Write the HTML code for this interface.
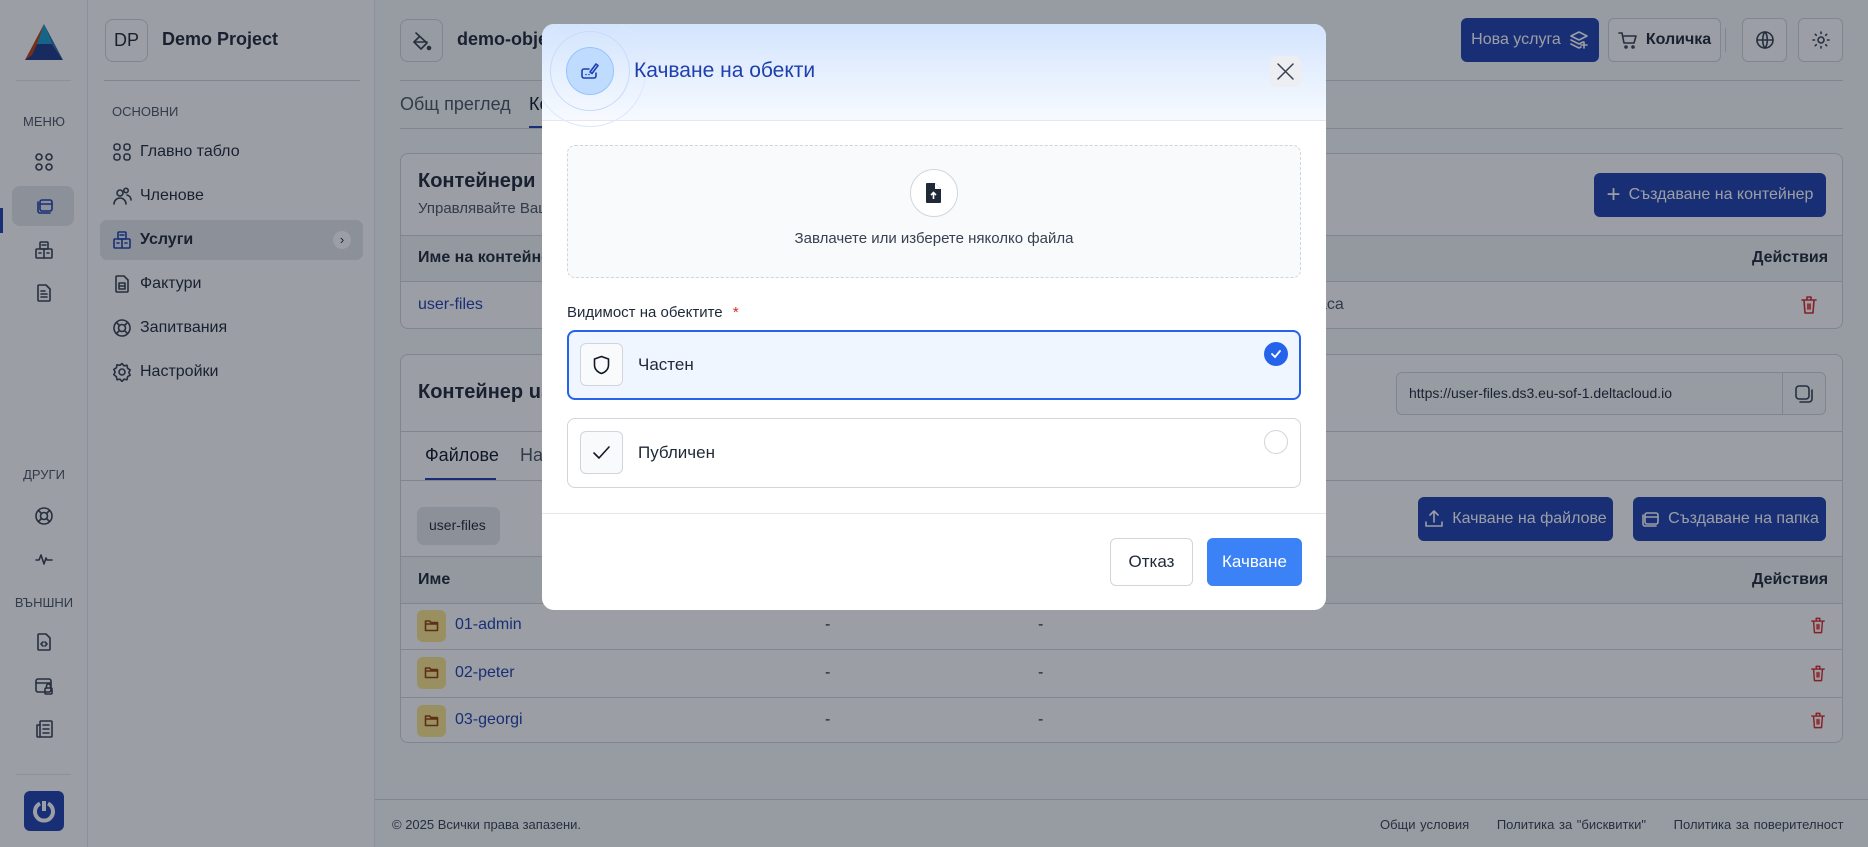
<!DOCTYPE html>
<html><head><meta charset="utf-8"><style>
*{box-sizing:border-box;margin:0;padding:0}
body{width:1868px;height:847px;overflow:hidden;position:relative;background:#f9fafb;font-family:"Liberation Sans",sans-serif;color:#1f2937}
.a{position:absolute}
.ic{position:absolute;fill:none;stroke:#374151;stroke-width:1.6;stroke-linecap:round;stroke-linejoin:round}
.t{position:absolute;white-space:nowrap}
.btn{position:absolute;background:#1e40af;color:#fff;border-radius:6px;font-size:16px;display:flex;align-items:center;justify-content:center;gap:8px}
.obtn{position:absolute;border:1px solid #d1d5db;border-radius:6px;background:#fff;display:flex;align-items:center;justify-content:center;gap:8px;font-size:16px}
.card{position:absolute;background:#fff;border:1px solid #d1d5db;border-radius:8px}
.hl{position:absolute;height:1px;background:#d1d5db}
.folder{position:absolute;width:29px;height:32px;border-radius:6px;background:#fde68a}
</style></head><body>

<!-- rail -->
<div class="a" style="left:0;top:0;width:88px;height:847px;background:#fff;border-right:1px solid #e5e7eb"></div>
<svg class="a" style="left:23px;top:22px" width="42" height="40" viewBox="0 0 42 40"><polygon points="21,2 2,38 14,38" fill="#c2410c"/><polygon points="21,2 14,22 29,22" fill="#1d9bd1"/><polygon points="21,2 40,38 29,22" fill="#1e6fa8"/><polygon points="14,22 29,22 40,38 2,38" fill="#1e3a8a"/><polygon points="14,22 9,33 2,38" fill="#c2410c"/></svg>
<div class="hl" style="left:16px;top:80px;width:55px;background:#e5e7eb"></div>
<div class="t" style="left:0;width:88px;text-align:center;top:114px;font-size:13px;color:#4b5563">МЕНЮ</div>
<svg class="ic" style="left:34px;top:152px" width="20" height="20" viewBox="0 0 20 20"><rect x="2" y="2" width="6" height="6" rx="3"/><rect x="12" y="2" width="6" height="6" rx="3"/><rect x="2" y="12" width="6" height="6" rx="3"/><rect x="12" y="12" width="6" height="6" rx="3"/></svg>
<div class="a" style="left:12px;top:186px;width:62px;height:40px;border-radius:8px;background:#e5e7eb"></div>
<div class="a" style="left:0;top:208px;width:3px;height:25px;background:#1e40af"></div>
<svg class="ic" style="left:34px;top:196px;stroke:#1e40af" width="20" height="20" viewBox="0 0 20 20"><path d="M4 6v9a2 2 0 0 0 2 2h10"/><rect x="6" y="4" width="12" height="11" rx="2"/><path d="M6 8h12"/></svg>
<svg class="ic" style="left:34px;top:240px" width="20" height="20" viewBox="0 0 20 20"><rect x="6" y="2" width="8" height="7" rx="1"/><rect x="2" y="9" width="16" height="9" rx="1"/><path d="M10 9v9M8 5h4M5 13h2M13 13h2"/></svg>
<svg class="ic" style="left:34px;top:283px" width="20" height="20" viewBox="0 0 20 20"><path d="M5 2h7l4 4v11a1 1 0 0 1-1 1H5a1 1 0 0 1-1-1V3a1 1 0 0 1 1-1z"/><path d="M7 8h4M7 11h6M7 14h6"/></svg>
<div class="t" style="left:0;width:88px;text-align:center;top:467px;font-size:13px;color:#4b5563">ДРУГИ</div>
<svg class="ic" style="left:34px;top:506px" width="20" height="20" viewBox="0 0 20 20"><circle cx="10" cy="10" r="8"/><circle cx="10" cy="10" r="3.5"/><path d="M4.5 4.5l3 3M15.5 4.5l-3 3M4.5 15.5l3-3M15.5 15.5l-3-3"/></svg>
<svg class="ic" style="left:34px;top:549px" width="20" height="20" viewBox="0 0 20 20"><path d="M2 11h3l2-5 3 9 2-6 1 2h5"/></svg>
<div class="t" style="left:0;width:88px;text-align:center;top:595px;font-size:13px;color:#4b5563">ВЪНШНИ</div>
<svg class="ic" style="left:34px;top:632px" width="20" height="20" viewBox="0 0 20 20"><path d="M5 2h7l4 4v11a1 1 0 0 1-1 1H5a1 1 0 0 1-1-1V3a1 1 0 0 1 1-1z"/><path d="M9 10l-2 2 2 2M11 10l2 2-2 2"/></svg>
<svg class="ic" style="left:34px;top:676px" width="20" height="20" viewBox="0 0 20 20"><rect x="2" y="3" width="15" height="13" rx="2"/><path d="M2 7h15"/><rect x="11" y="12" width="7" height="6" rx="1"/><path d="M12.5 12v-2a2 2 0 0 1 4 0v2"/></svg>
<svg class="ic" style="left:34px;top:719px" width="20" height="20" viewBox="0 0 20 20"><rect x="6" y="2" width="12" height="16" rx="1"/><path d="M6 6H3v11a1 1 0 0 0 1 1h2M9 6h6M9 10h6M9 14h6"/></svg>
<div class="hl" style="left:16px;top:774px;width:55px;background:#e5e7eb"></div>
<div class="a" style="left:24px;top:791px;width:40px;height:40px;border-radius:6px;background:#1e40af"></div>
<svg class="a" style="left:30px;top:797px" width="28" height="28" viewBox="0 0 28 28"><path d="M10 6.5A9 9 0 1 0 18 6.5" fill="none" stroke="#fff" stroke-width="4"/><path d="M14 4v10" stroke="#fff" stroke-width="4"/></svg>

<!-- sidebar 2 -->
<div class="a" style="left:88px;top:0;width:287px;height:847px;background:#fff;border-right:1px solid #e5e7eb"></div>
<div class="a" style="left:105px;top:19px;width:43px;height:43px;border:1px solid #d1d5db;border-radius:8px;font-size:18px;display:flex;align-items:center;justify-content:center">DP</div>
<div class="t" style="left:162px;top:29px;font-size:18px;font-weight:bold;color:#1f2937">Demo Project</div>
<div class="hl" style="left:104px;top:80px;width:256px"></div>
<div class="t" style="left:112px;top:104px;font-size:13px;color:#4b5563">ОСНОВНИ</div>
<div class="a" style="left:100px;top:220px;width:263px;height:40px;border-radius:7px;background:#e5e7eb"></div>
<svg class="ic" style="left:112px;top:142px" width="20" height="20" viewBox="0 0 20 20"><rect x="2" y="2" width="6" height="6" rx="2.5"/><rect x="12" y="2" width="6" height="6" rx="2.5"/><rect x="2" y="12" width="6" height="6" rx="2.5"/><rect x="12" y="12" width="6" height="6" rx="2.5"/></svg>
<div class="t" style="left:140px;top:143px;font-size:16px">Главно табло</div>
<svg class="ic" style="left:112px;top:186px" width="20" height="20" viewBox="0 0 20 20"><circle cx="8" cy="7" r="3"/><path d="M2 18a6 6 0 0 1 12 0"/><circle cx="14" cy="4.5" r="2.2"/><path d="M15 9a5 5 0 0 1 4 5"/></svg>
<div class="t" style="left:140px;top:187px;font-size:16px">Членове</div>
<svg class="ic" style="left:112px;top:230px;stroke:#1e40af" width="20" height="20" viewBox="0 0 20 20"><rect x="6" y="2" width="8" height="7" rx="1"/><rect x="2" y="9" width="16" height="9" rx="1"/><path d="M10 9v9M8 5h4M5 13h2M13 13h2"/></svg>
<div class="t" style="left:140px;top:231px;font-size:16px;font-weight:bold">Услуги</div>
<div class="a" style="left:333px;top:231px;width:18px;height:18px;border-radius:50%;background:#fff;font-size:13px;text-align:center;line-height:17px">›</div>
<svg class="ic" style="left:112px;top:274px" width="20" height="20" viewBox="0 0 20 20"><path d="M5 2h7l4 4v11a1 1 0 0 1-1 1H5a1 1 0 0 1-1-1V3a1 1 0 0 1 1-1z"/><path d="M7 9h6v6H7zM7 12h6"/></svg>
<div class="t" style="left:140px;top:275px;font-size:16px">Фактури</div>
<svg class="ic" style="left:112px;top:318px" width="20" height="20" viewBox="0 0 20 20"><circle cx="10" cy="10" r="8"/><circle cx="10" cy="10" r="3.5"/><path d="M4.5 4.5l3 3M15.5 4.5l-3 3M4.5 15.5l3-3M15.5 15.5l-3-3"/></svg>
<div class="t" style="left:140px;top:319px;font-size:16px">Запитвания</div>
<svg class="ic" style="left:112px;top:362px" width="20" height="20" viewBox="0 0 20 20"><circle cx="10" cy="10" r="3"/><path d="M10 1.5l2 2.3 3-.5.6 3 2.6 1.6-1.4 2.6 1.4 2.6-2.6 1.6-.6 3-3-.5-2 2.3-2-2.3-3 .5-.6-3L1.8 12.6 3.2 10 1.8 7.4l2.6-1.6.6-3 3 .5z"/></svg>
<div class="t" style="left:140px;top:363px;font-size:16px">Настройки</div>

<!-- main header -->
<div class="a" style="left:400px;top:19px;width:43px;height:43px;border:1px solid #d1d5db;border-radius:8px"></div>
<svg class="ic" style="left:411px;top:30px" width="22" height="22" viewBox="0 0 22 22"><path d="M5 3l11 10-6 6-7-7 5-5"/><path d="M3 12h13"/><circle cx="18" cy="18" r="1.5" fill="#374151"/></svg>
<div class="t" style="left:457px;top:29px;font-size:18px;font-weight:bold">demo-objects</div>
<div class="btn" style="left:1461px;top:18px;width:138px;height:44px">Нова услуга <svg class="ic" style="position:static;stroke:#fff" width="20" height="20" viewBox="0 0 20 20"><path d="M10 2l8 4-8 4-8-4z"/><path d="M2 10l8 4 4-2M2 14l8 4 2-1M15 12v6M12 15h6"/></svg></div>
<div class="obtn" style="left:1608px;top:18px;width:113px;height:44px;font-weight:bold"><svg class="ic" style="position:static" width="20" height="20" viewBox="0 0 20 20"><path d="M1 3h3l2 10h10l2-7H6"/><circle cx="8" cy="17" r="1"/><circle cx="15" cy="17" r="1"/></svg>Количка</div>
<div class="a" style="left:1725px;top:28px;width:1px;height:24px;background:#d1d5db"></div>
<div class="obtn" style="left:1742px;top:18px;width:45px;height:44px"><svg class="ic" style="position:static" width="20" height="20" viewBox="0 0 20 20"><circle cx="10" cy="10" r="8"/><path d="M2 10h16M10 2c3 3 3 13 0 16M10 2c-3 3-3 13 0 16"/></svg></div>
<div class="obtn" style="left:1798px;top:18px;width:45px;height:44px"><svg class="ic" style="position:static" width="20" height="20" viewBox="0 0 20 20"><circle cx="10" cy="10" r="3"/><path d="M10 2v1.5M10 16.5V18M2 10h1.5M16.5 10H18M4.3 4.3l1 1M14.7 14.7l1 1M4.3 15.7l1-1M14.7 5.3l1-1"/></svg></div>
<div class="hl" style="left:400px;top:80px;width:1443px"></div>
<div class="t" style="left:400px;top:94px;font-size:18px;color:#4b5563">Общ преглед</div>
<div class="t" style="left:529px;top:94px;font-size:18px;color:#111827">Контейнери</div>
<div class="a" style="left:529px;top:126px;width:110px;height:3px;background:#1e40af"></div>
<div class="hl" style="left:400px;top:128px;width:1443px"></div>

<!-- card 1 -->
<div class="card" style="left:400px;top:153px;width:1443px;height:176px"></div>
<div class="t" style="left:418px;top:170px;font-size:20px;font-weight:bold">Контейнери</div>
<div class="t" style="left:418px;top:200px;font-size:15px;color:#4b5563">Управлявайте Вашите контейнери</div>
<div class="btn" style="left:1594px;top:173px;width:232px;height:44px"><span style="font-size:24px;font-weight:300">+</span> Създаване на контейнер</div>
<div class="hl" style="left:401px;top:235px;width:1441px"></div>
<div class="a" style="left:401px;top:236px;width:1441px;height:45px;background:#f3f4f6"></div>
<div class="t" style="left:418px;top:249px;font-size:16px;font-weight:bold">Име на контейнера</div>
<div class="t" style="left:1752px;top:249px;font-size:16px;font-weight:bold">Действия</div>
<div class="hl" style="left:401px;top:281px;width:1441px"></div>
<div class="t" style="left:418px;top:296px;font-size:16px;color:#1e40af">user-files</div>
<div class="t" style="left:1318px;top:296px;font-size:16px;color:#4b5563">аса</div>
<svg class="ic" style="left:1800px;top:295px;stroke:#dc2626" width="18" height="20" viewBox="0 0 18 20"><path d="M2 5h14M7 5V2h4v3M4 5l1 13h8l1-13M8 9v5M10 9v5"/></svg>

<!-- card 2 -->
<div class="card" style="left:400px;top:354px;width:1443px;height:389px"></div>
<div class="t" style="left:418px;top:381px;font-size:20px;font-weight:bold">Контейнер user-files</div>
<div class="a" style="left:1396px;top:372px;width:430px;height:43px;border:1px solid #d1d5db;border-radius:6px;background:#f9fafb"></div>
<div class="t" style="left:1409px;top:385px;font-size:14px">https://user-files.ds3.eu-sof-1.deltacloud.io</div>
<div class="a" style="left:1782px;top:372px;width:1px;height:43px;background:#d1d5db"></div>
<svg class="ic" style="left:1794px;top:384px" width="20" height="20" viewBox="0 0 20 20"><rect x="2" y="2" width="13" height="13" rx="3"/><path d="M18 6v9a3 3 0 0 1-3 3H6"/></svg>
<div class="hl" style="left:401px;top:431px;width:1441px"></div>
<div class="t" style="left:425px;top:445px;font-size:18px;color:#111827">Файлове</div>
<div class="t" style="left:520px;top:445px;font-size:18px;color:#4b5563">Настройки</div>
<div class="a" style="left:425px;top:478px;width:71px;height:3px;background:#1e40af"></div>
<div class="hl" style="left:401px;top:480px;width:1441px"></div>
<div class="a" style="left:417px;top:507px;width:83px;height:38px;border-radius:7px;background:#e5e7eb"></div>
<div class="t" style="left:429px;top:517px;font-size:14px">user-files</div>
<div class="btn" style="left:1418px;top:497px;width:195px;height:44px"><svg class="ic" style="position:static;stroke:#fff" width="20" height="20" viewBox="0 0 20 20"><path d="M10 13V2M6 6l4-4 4 4M2 13v4h16v-4"/></svg>Качване на файлове</div>
<div class="btn" style="left:1633px;top:497px;width:193px;height:44px"><svg class="ic" style="position:static;stroke:#fff" width="20" height="20" viewBox="0 0 20 20"><path d="M3 6v9a2 2 0 0 0 2 2h11"/><rect x="5" y="4" width="13" height="11" rx="2"/><path d="M5 8h13"/></svg>Създаване на папка</div>
<div class="hl" style="left:401px;top:556px;width:1441px"></div>
<div class="a" style="left:401px;top:557px;width:1441px;height:46px;background:#f3f4f6"></div>
<div class="t" style="left:418px;top:571px;font-size:16px;font-weight:bold">Име</div>
<div class="t" style="left:1752px;top:571px;font-size:16px;font-weight:bold">Действия</div>
<div class="hl" style="left:401px;top:603px;width:1441px"></div>
<div class="hl" style="left:401px;top:649px;width:1441px"></div>
<div class="hl" style="left:401px;top:697px;width:1441px"></div>

<div class="folder" style="left:417px;top:610px"></div><div class="t" style="left:455px;top:616px;font-size:16px;color:#1e40af">01-admin</div>
<div class="folder" style="left:417px;top:657px"></div><div class="t" style="left:455px;top:664px;font-size:16px;color:#1e40af">02-peter</div>
<div class="folder" style="left:417px;top:705px"></div><div class="t" style="left:455px;top:711px;font-size:16px;color:#1e40af">03-georgi</div>
<svg class="ic" style="left:424px;top:618px;stroke:#92400e" width="15" height="15" viewBox="0 0 15 15"><path d="M1.5 3h4l1.5 1.5h6.5v8h-12z M1.5 6h12"/></svg>
<svg class="ic" style="left:424px;top:665px;stroke:#92400e" width="15" height="15" viewBox="0 0 15 15"><path d="M1.5 3h4l1.5 1.5h6.5v8h-12z M1.5 6h12"/></svg>
<svg class="ic" style="left:424px;top:713px;stroke:#92400e" width="15" height="15" viewBox="0 0 15 15"><path d="M1.5 3h4l1.5 1.5h6.5v8h-12z M1.5 6h12"/></svg>
<div class="t" style="left:825px;top:616px">-</div><div class="t" style="left:1038px;top:616px">-</div>
<div class="t" style="left:825px;top:664px">-</div><div class="t" style="left:1038px;top:664px">-</div>
<div class="t" style="left:825px;top:711px">-</div><div class="t" style="left:1038px;top:711px">-</div>
<svg class="ic" style="left:1810px;top:616px;stroke:#dc2626" width="16" height="19" viewBox="0 0 18 20"><path d="M2 5h14M7 5V2h4v3M4 5l1 13h8l1-13M8 9v5M10 9v5"/></svg>
<svg class="ic" style="left:1810px;top:664px;stroke:#dc2626" width="16" height="19" viewBox="0 0 18 20"><path d="M2 5h14M7 5V2h4v3M4 5l1 13h8l1-13M8 9v5M10 9v5"/></svg>
<svg class="ic" style="left:1810px;top:711px;stroke:#dc2626" width="16" height="19" viewBox="0 0 18 20"><path d="M2 5h14M7 5V2h4v3M4 5l1 13h8l1-13M8 9v5M10 9v5"/></svg>

<!-- footer -->
<div class="hl" style="left:375px;top:799px;width:1493px"></div>
<div class="t" style="left:392px;top:817px;font-size:13px;color:#374151">© 2025 Всички права запазени.</div>
<div class="t" style="left:1380px;top:817px;font-size:13px;color:#374151;word-spacing:1px">Общи условия &nbsp;&nbsp;&nbsp;&nbsp; Политика за "бисквитки" &nbsp;&nbsp;&nbsp;&nbsp; Политика за поверителност</div>

<!-- overlay -->
<div class="a" style="left:0;top:0;width:1868px;height:847px;background:rgba(17,24,39,0.42)"></div>

<!-- modal -->
<div class="a" style="left:542px;top:24px;width:784px;height:586px;background:#fff;border-radius:12px;overflow:hidden">
  <div class="a" style="left:0;top:0;width:784px;height:97px;background:linear-gradient(#d3e4fd,#f7faff);border-bottom:1px solid #e5e7eb"></div>
  <div class="a" style="left:-8px;top:-9px;width:112px;height:112px;border-radius:50%;border:1px solid #dbe8fd"></div>
  <div class="a" style="left:8px;top:7px;width:80px;height:80px;border-radius:50%;border:1px solid #c7dbfb"></div>
  <div class="a" style="left:24px;top:23px;width:48px;height:48px;border-radius:50%;background:#bfdbfe;border:1px solid #93c5fd"></div>
  <svg class="ic" style="left:38px;top:37px;stroke:#1e40af" width="20" height="20" viewBox="0 0 20 20"><path d="M9 8H4a2 2 0 0 0-2 2v5a2 2 0 0 0 2 2h10a2 2 0 0 0 2-2v-3"/><path d="M10 11l6-8 2 1.5-6 8z"/><path d="M6 13.5h.01M9 13.5h.01"/></svg>
  <div class="t" style="left:92px;top:35px;font-size:21px;color:#1e40af">Качване на обекти</div>
  <div class="a" style="left:728px;top:32px;width:31px;height:31px;border-radius:6px;background:#eceef2"></div>
  <svg class="ic" style="left:735px;top:39px;stroke:#374151;stroke-width:1.5" width="17" height="17" viewBox="0 0 17 17"><path d="M1 1l15 15M16 1L1 16"/></svg>

  <div class="a" style="left:25px;top:121px;width:734px;height:133px;border:1px dashed #d1d5db;border-radius:8px;background:#f9fafb"></div>
  <div class="a" style="left:368px;top:145px;width:48px;height:48px;border-radius:50%;background:#fff;border:1px solid #d1d5db"></div>
  <svg class="a" style="left:382px;top:158px" width="20" height="22" viewBox="0 0 20 22"><path d="M3 1h8l6 6v13a1 1 0 0 1-1 1H3a1 1 0 0 1-1-1V2a1 1 0 0 1 1-1z" fill="#1f2937"/><path d="M11 1v6h6" fill="#fff"/><path d="M9.5 17v-6M7 13l2.5-2.5L12 13" stroke="#fff" stroke-width="1.6" fill="none"/></svg>
  <div class="t" style="left:0;width:784px;text-align:center;top:206px;font-size:15px;color:#374151">Завлачете или изберете няколко файла</div>

  <div class="t" style="left:25px;top:280px;font-size:15px;color:#1f2937">Видимост на обектите <span style="color:#dc2626;margin-left:6px">*</span></div>

  <div class="a" style="left:25px;top:306px;width:734px;height:70px;border:2px solid #2563eb;border-radius:8px;background:#eff6ff"></div>
  <div class="a" style="left:38px;top:319px;width:43px;height:43px;border:1px solid #d1d5db;border-radius:6px;background:#f9fafb"></div>
  <svg class="ic" style="left:50px;top:331px;stroke:#111827" width="19" height="20" viewBox="0 0 19 20"><path d="M9.5 1.5l7 2.5v6c0 4.5-3.5 7.5-7 8.5-3.5-1-7-4-7-8.5V4z"/></svg>
  <div class="t" style="left:96px;top:331px;font-size:17px;color:#1f2937">Частен</div>
  <div class="a" style="left:722px;top:318px;width:24px;height:24px;border-radius:50%;background:#2563eb"></div>
  <svg class="a" style="left:727px;top:323px" width="14" height="14" viewBox="0 0 14 14"><path d="M3 7l3 3 5-6" fill="none" stroke="#fff" stroke-width="1.8" stroke-linecap="round"/></svg>

  <div class="a" style="left:25px;top:394px;width:734px;height:70px;border:1px solid #d1d5db;border-radius:8px;background:#fff"></div>
  <div class="a" style="left:38px;top:407px;width:43px;height:43px;border:1px solid #d1d5db;border-radius:6px;background:#f9fafb"></div>
  <svg class="ic" style="left:49px;top:419px;stroke:#111827" width="20" height="20" viewBox="0 0 20 20"><path d="M3 10l5 5 10-11"/></svg>
  <div class="t" style="left:96px;top:419px;font-size:17px;color:#1f2937">Публичен</div>
  <div class="a" style="left:722px;top:406px;width:24px;height:24px;border-radius:50%;border:1px solid #d1d5db;background:#fff"></div>

  <div class="a" style="left:0;top:489px;width:784px;height:1px;background:#e5e7eb"></div>
  <div class="obtn" style="left:568px;top:514px;width:83px;height:48px;font-size:17px;color:#1f2937">Отказ</div>
  <div class="a" style="left:665px;top:514px;width:95px;height:48px;border-radius:6px;background:#3b82f6;color:#fff;font-size:17px;display:flex;align-items:center;justify-content:center">Качване</div>
</div>
</body></html>
